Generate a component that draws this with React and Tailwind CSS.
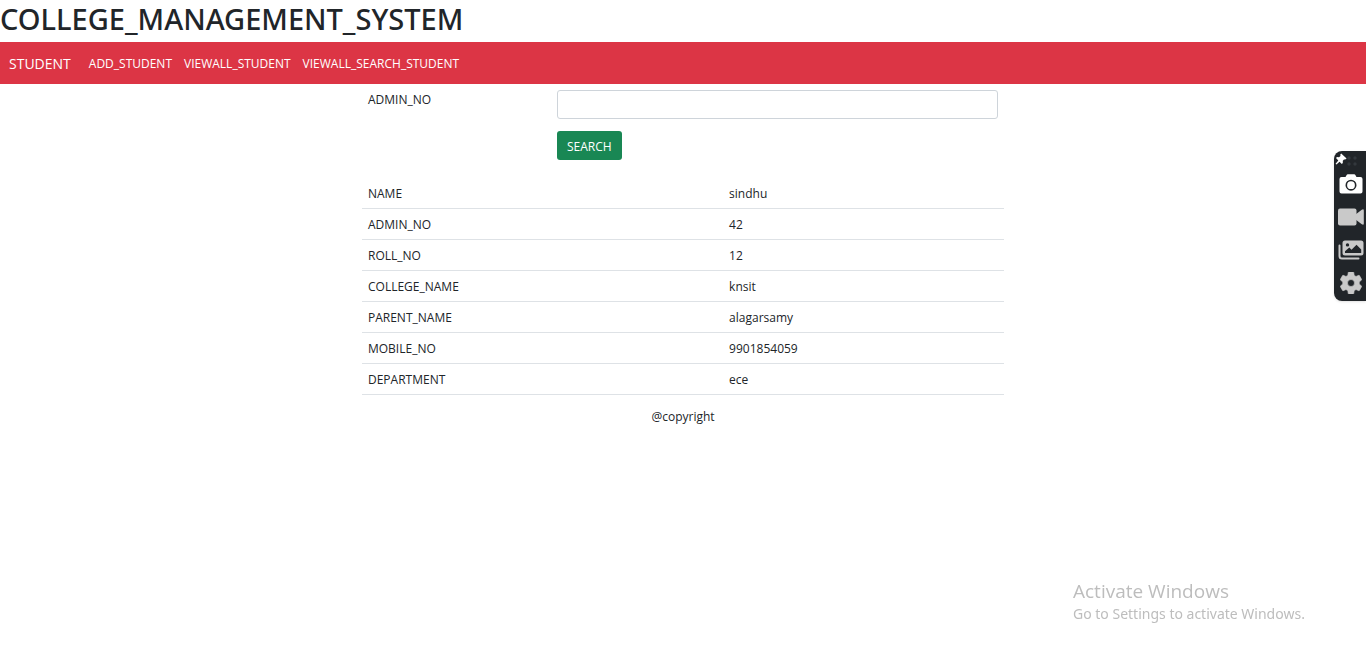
import React from "react";

const links = ["ADD_STUDENT", "VIEWALL_STUDENT", "VIEWALL_SEARCH_STUDENT"];

const rows = [
  ["NAME", "sindhu"],
  ["ADMIN_NO", "42"],
  ["ROLL_NO", "12"],
  ["COLLEGE_NAME", "knsit"],
  ["PARENT_NAME", "alagarsamy"],
  ["MOBILE_NO", "9901854059"],
  ["DEPARTMENT", "ece"],
];

function PinIcon() {
  return (
    <svg viewBox="0 0 12 12" className="size-3" fill="#fff" aria-hidden="true">
      <path d="M6.2.4 11.600 5.6 10.2 6.6 9 6.5 7.800 7.8 7.8 10 6.8 11 4.500 8.700 1.500 11.500.6 10.800 3.300 7.400 1 5.100 2 4.100 4 4.200 5.500 2.900 5.300 1.500Z" />
    </svg>
  );
}

function CameraIcon() {
  return (
    <svg viewBox="0 0 24 20" className="h-5 w-6" aria-hidden="true">
      <path fill="#fff" fillRule="evenodd" d="M2.500 3H6.500l1.300-2.200Q8.100.3 8.700.3h6.600q.6 0 .9.5L17.500 3h4q2 0 2 2v12.500q0 2-2 2h-19q-2 0-2-2V5q0-2 2-2ZM12 5.700a5.500 5.500 0 1 0 0 11 5.500 5.500 0 0 0 0-11Zm0 1.600a3.900 3.900 0 1 1 0 7.800 3.900 3.900 0 0 1 0-7.800Z" />
    </svg>
  );
}

function VideoIcon() {
  return (
    <svg viewBox="0 0 26 18" className="h-[18px] w-[26px]" fill="#c9c9c9" aria-hidden="true">
      <path d="M2 .5h14.500q2 0 2 2v13q0 2-2 2H2q-2 0-2-2v-13q0-2 2-2Z" />
      <path d="M17.500 6.500 23.800 1.700q2-1.200 2 .8v13q0 2-2 .8l-6.300-4.800Z" />
    </svg>
  );
}

function GalleryIcon() {
  return (
    <svg viewBox="0 0 26 20" className="h-5 w-[26px]" aria-hidden="true">
      <path fill="none" stroke="#c9c9c9" strokeWidth="2" strokeLinecap="round" d="M1.500 5.500V16q0 2.500 2.500 2.500h16.500" />
      <path fill="#c9c9c9" fillRule="evenodd" d="M7 .5h16q2.500 0 2.500 2.500v10q0 2.500-2.500 2.500H7Q4.500 15.500 4.500 13V3Q4.500.5 7 .5ZM7 13h16.200V9.500L18.500 4.800l-5 5-2.200-2.200L7 11.200ZM9.500 3.200a1.700 1.700 0 1 0 0 3.400 1.700 1.700 0 0 0 0-3.400Z" />
    </svg>
  );
}

function GearIcon() {
  return (
    <svg viewBox="2 2 20 20" className="size-[22px]" fill="#c9c9c9" aria-hidden="true">
      <path
        stroke="#c9c9c9"
        strokeWidth="0.6"
        strokeLinejoin="round"
        d="M19.430 12.980c.040-.320.070-.640.070-.980s-.030-.660-.070-.980l2.110-1.650c.190-.150.240-.420.120-.640l-2-3.460c-.120-.220-.390-.300-.610-.220l-2.490 1c-.520-.400-1.080-.730-1.690-.980l-.380-2.650A.488.488 0 0 0 14 2h-4c-.250 0-.460.180-.490.420l-.380 2.650c-.610.250-1.170.590-1.690.980l-2.490-1c-.230-.090-.490 0-.610.220l-2 3.460c-.130.220-.070.490.120.640l2.110 1.650c-.040.320-.070.650-.070.980s.030.660.070.980l-2.110 1.650c-.190.150-.240.420-.120.640l2 3.460c.120.220.390.300.610.220l2.490-1c.520.400 1.080.730 1.690.980l.380 2.650c.030.240.240.420.490.420h4c.250 0 .460-.180.490-.420l.380-2.650c.610-.250 1.170-.590 1.690-.980l2.490 1c.230.090.490 0 .610-.220l2-3.460c.120-.220.070-.490-.120-.640l-2.110-1.650zM12 15.200a3.200 3.200 0 1 1 0-6.400 3.200 3.200 0 0 1 0 6.400z"
      />
    </svg>
  );
}

function GripDots() {
  return (
    <svg viewBox="0 0 12 14" className="h-3.5 w-3" fill="#33383d" aria-hidden="true">
      {[2, 8].map((x) => (
        <React.Fragment key={x}>
          <circle cx={x} cy="6" r="1.700" />
          <circle cx={x} cy="12" r="1.700" />
        </React.Fragment>
      ))}
    </svg>
  );
}

function CaptureBar() {
  const tools = [
    ["Take screenshot", <CameraIcon />],
    ["Record video", <VideoIcon />],
    ["Open gallery", <GalleryIcon />],
    ["Settings", <GearIcon />],
  ];
  return (
    <aside className="fixed top-[151px] right-0 flex w-8 flex-col rounded-l-lg bg-[#212529] pb-0.5 shadow-sm">
      <div className="flex h-4 items-center">
        <button aria-label="Pin toolbar" className="shrink-0 pl-px">
          <PinIcon />
        </button>
        <GripDots />
      </div>
      {tools.map(([label, icon]) => (
        <button key={label} aria-label={label} className="flex h-[33px] items-center justify-end pr-0.5">
          <span className="flex w-[26px] justify-center">{icon}</span>
        </button>
      ))}
    </aside>
  );
}

export default function App() {
  return (
    <div className="min-h-screen bg-white font-['Open_Sans','Noto_Sans',sans-serif] text-xs leading-[18px] text-[#212529]">
      <h1 className="mb-1 font-['Noto_Sans',sans-serif] text-[29px] leading-[38px] font-medium">
        COLLEGE_MANAGEMENT_SYSTEM
      </h1>

      <nav className="flex h-[42px] items-center bg-[#dc3545] px-[9px] pt-0.5 text-white">
        <a href="#student" className="mr-3 text-sm">STUDENT</a>
        <ul className="flex">
          {links.map((label) => (
            <li key={label}>
              <a href={"#" + label.toLowerCase()} className="px-1.5">{label}</a>
            </li>
          ))}
        </ul>
      </nav>

      <main className="mx-auto w-[47%]">
        <form className="grid grid-cols-[3fr_7fr] gap-y-3 px-1.5 pt-1.5" onSubmit={(e) => e.preventDefault()}>
          <label htmlFor="admin-no" className="pt-px">ADMIN_NO</label>
          <input
            id="admin-no"
            type="text"
            className="h-[29px] w-full rounded-[3px] border border-[#ced4da] bg-white px-2 outline-none"
          />
          <button
            type="submit"
            className="col-start-2 h-[29px] justify-self-start rounded-[3px] bg-[#198754] px-2.5 pt-0.5 text-white"
          >
            SEARCH
          </button>
        </form>

        <table className="mt-[18px] w-full border-collapse">
          <tbody>
            {rows.map(([name, value]) => (
              <tr key={name} className="border-b border-[#dee2e6]">
                <th scope="row" className="w-9/16 px-1.5 pt-[7px] pb-[5px] text-left font-normal">{name}</th>
                <td className="px-1.5 pt-[7px] pb-[5px]">{value}</td>
              </tr>
            ))}
          </tbody>
        </table>
      </main>

      <footer className="mt-[13px] text-center">@copyright</footer>

      <CaptureBar />

      <div className="fixed right-[57px] bottom-[30px] w-[236px] text-[#bdbdbd]">
        <p className="text-[19px] leading-6">Activate Windows</p>
        <p className="font-['Noto_Sans',sans-serif] text-sm leading-[22px]">Go to Settings to activate Windows.</p>
      </div>
    </div>
  );
}
